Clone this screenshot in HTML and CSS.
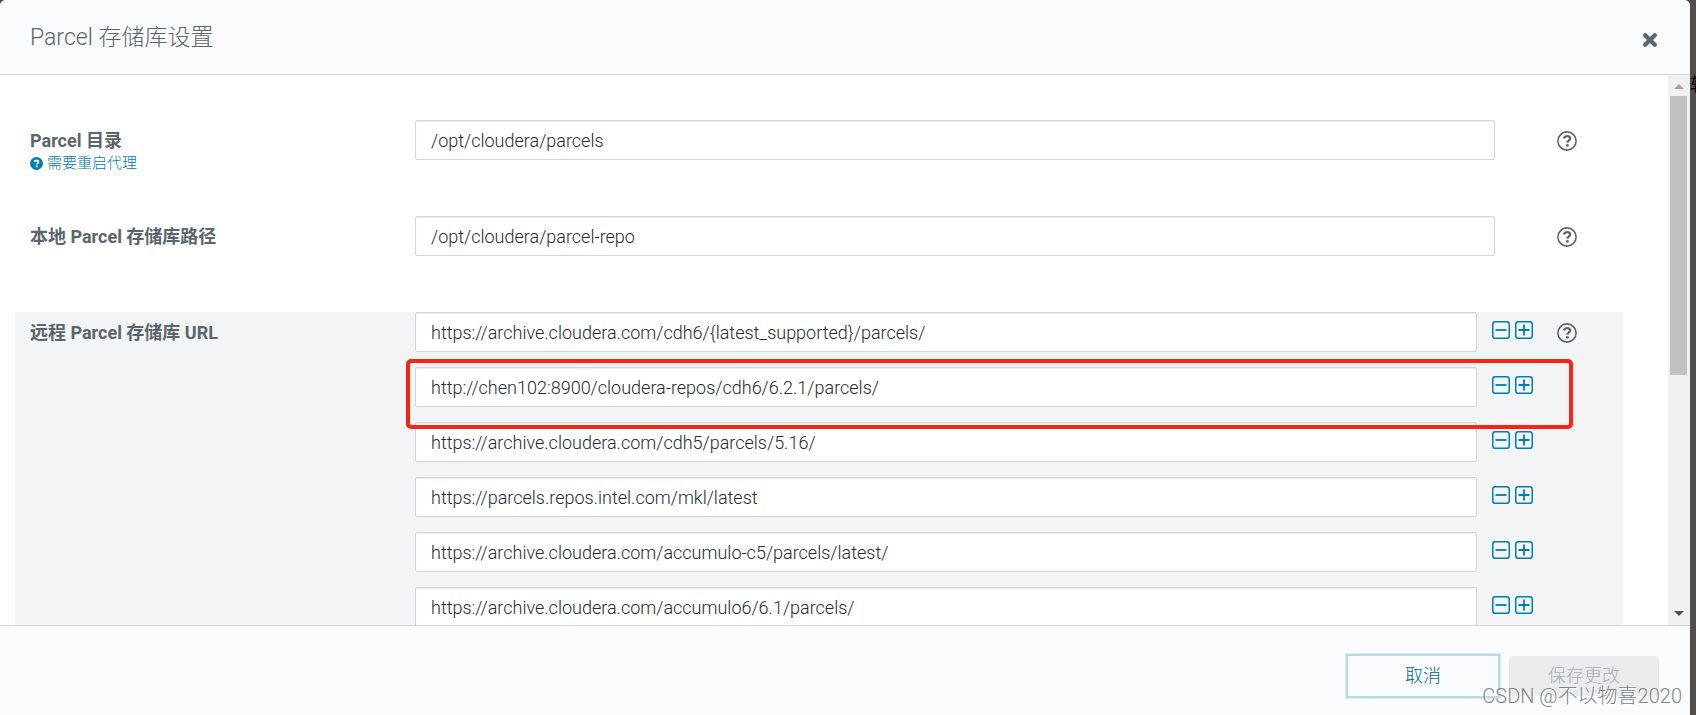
FILE: index.html
```html
<!DOCTYPE html>
<html lang="zh-CN">
<head>
<meta charset="utf-8">
<meta name="viewport" content="width=device-width, initial-scale=1">
<title>Parcel 存储库设置</title>
<link rel="stylesheet" href="styles.css">
</head>
<body>
<svg class="defs" aria-hidden="true">
  <symbol id="help" viewBox="0 0 20 20">
    <circle cx="10" cy="10" r="9.1" fill="none" stroke="currentColor" stroke-width="1.6"/>
    <path d="M6.9 7.4C7.5 5.9 8.7 5.2 10.2 5.2c1.7 0 2.9 1 2.9 2.4 0 2.1-2.7 2.1-2.7 4.2" fill="none" stroke="currentColor" stroke-width="2.3"/>
    <path d="M9 13.2h2.7v2.4H9z" fill="currentColor"/>
  </symbol>
  <symbol id="minus" viewBox="0 0 18 18">
    <rect x=".75" y=".75" width="16.5" height="16.5" rx="2.6" fill="none" stroke="currentColor" stroke-width="1.5"/>
    <path d="M3.5 9h11" stroke="currentColor" stroke-width="1.8"/>
  </symbol>
  <symbol id="plus" viewBox="0 0 18 18">
    <rect x=".75" y=".75" width="16.5" height="16.5" rx="2.6" fill="none" stroke="currentColor" stroke-width="1.5"/>
    <path d="M3.5 9h11M9 3.5v11" stroke="currentColor" stroke-width="1.8"/>
  </symbol>
</svg>
<div class="behind" aria-hidden="true">软</div>
<main class="modal">
  <header class="modal-header">
    <h1 class="title">Parcel 存储库设置</h1>
    <button class="close" type="button" aria-label="关闭"><svg viewBox="0 0 14 14"><path d="M2.2 2.2l9.6 9.6M11.8 2.2l-9.6 9.6" stroke="currentColor" stroke-width="4.2" stroke-linecap="round"/></svg></button>
  </header>
  <div class="modal-body">
    <form class="settings">
      <div class="setting">
        <div class="label-col">
          <label class="label" for="dir">Parcel 目录</label>
          <a class="restart" href="#"><svg class="restart-icon" viewBox="0 0 13 13"><circle cx="6.5" cy="6.5" r="6.5" fill="currentColor"/><path d="M4.3 4.9C4.7 3.8 5.4 3.3 6.5 3.3c1.2 0 2 .7 2 1.6 0 1.4-1.8 1.4-1.8 2.7" fill="none" stroke="#fff" stroke-width="1.7"/><path d="M5.8 8.6h1.8v1.7H5.8z" fill="#fff"/></svg>需要重启代理</a>
        </div>
        <input class="field" id="dir" type="text" value="/opt/cloudera/parcels">
        <button class="help" type="button" aria-label="帮助"><svg><use href="#help"/></svg></button>
      </div>
      <div class="setting">
        <div class="label-col"><label class="label" for="repo">本地 Parcel 存储库路径</label></div>
        <input class="field" id="repo" type="text" value="/opt/cloudera/parcel-repo">
        <button class="help" type="button" aria-label="帮助"><svg><use href="#help"/></svg></button>
      </div>
      <div class="setting setting-active">
        <div class="label-col"><label class="label" for="url1">远程 Parcel 存储库 URL</label></div>
        <div class="urls">
          <div class="url-row"><input class="field" id="url1" type="text" value="https://archive.cloudera.com/cdh6/{latest_supported}/parcels/"><span class="actions"><button type="button" aria-label="删除"><svg><use href="#minus"/></svg></button><button type="button" aria-label="添加"><svg><use href="#plus"/></svg></button></span></div>
          <div class="url-row marked"><input class="field" type="text" aria-label="URL 2" value="http://chen102:8900/cloudera-repos/cdh6/6.2.1/parcels/"><span class="actions"><button type="button" aria-label="删除"><svg><use href="#minus"/></svg></button><button type="button" aria-label="添加"><svg><use href="#plus"/></svg></button></span></div>
          <div class="url-row"><input class="field" type="text" aria-label="URL 3" value="https://archive.cloudera.com/cdh5/parcels/5.16/"><span class="actions"><button type="button" aria-label="删除"><svg><use href="#minus"/></svg></button><button type="button" aria-label="添加"><svg><use href="#plus"/></svg></button></span></div>
          <div class="url-row"><input class="field" type="text" aria-label="URL 4" value="https://parcels.repos.intel.com/mkl/latest"><span class="actions"><button type="button" aria-label="删除"><svg><use href="#minus"/></svg></button><button type="button" aria-label="添加"><svg><use href="#plus"/></svg></button></span></div>
          <div class="url-row"><input class="field" type="text" aria-label="URL 5" value="https://archive.cloudera.com/accumulo-c5/parcels/latest/"><span class="actions"><button type="button" aria-label="删除"><svg><use href="#minus"/></svg></button><button type="button" aria-label="添加"><svg><use href="#plus"/></svg></button></span></div>
          <div class="url-row"><input class="field" type="text" aria-label="URL 6" value="https://archive.cloudera.com/accumulo6/6.1/parcels/"><span class="actions"><button type="button" aria-label="删除"><svg><use href="#minus"/></svg></button><button type="button" aria-label="添加"><svg><use href="#plus"/></svg></button></span></div>
        </div>
        <button class="help" type="button" aria-label="帮助"><svg><use href="#help"/></svg></button>
      </div>
    </form>
    <div class="scrollbar" aria-hidden="true">
      <svg class="arrow arrow-up" viewBox="0 0 10 5"><path d="M0 5l5-5 5 5z"/></svg>
      <div class="track"><div class="thumb"></div></div>
      <svg class="arrow" viewBox="0 0 10 5"><path d="M0 0h10L5 5z"/></svg>
    </div>
  </div>
  <footer class="modal-footer">
    <button class="btn btn-cancel" type="button">取消</button>
    <button class="btn" type="button" disabled>保存更改</button>
  </footer>
</main>
<div class="watermark">CSDN @不以物喜2020</div>
</body>
</html>
```

FILE: styles.css
```css
* {
  box-sizing: border-box;
}

body {
  margin: 0;
  height: 100vh;
  overflow: hidden;
  position: relative;
  padding-right: 6px;
  background: #504f4e;
  color: #5a656d;
  font: 18px/24px Roboto, "Noto Sans CJK SC", sans-serif;
}

button {
  padding: 0;
  border: 0;
  background: none;
  color: inherit;
  font: inherit;
}

.defs {
  position: absolute;
  width: 0;
  height: 0;
}

.behind {
  position: absolute;
  top: 73px;
  right: 0;
  width: 6px;
  overflow: hidden;
  color: #000;
}

.modal {
  display: flex;
  flex-direction: column;
  height: 100%;
  overflow: hidden;
  border-radius: 6px 6px 0 0;
  background: #fff;
}

.modal-header {
  display: flex;
  justify-content: space-between;
  align-items: center;
  height: 75px;
  padding: 2px 33px 0 30px;
  border-bottom: 1px solid #d3d6d9;
  background: #fafbfd;
}

.title {
  margin: 0;
  font-size: 23px;
  font-weight: 300;
}

.close {
  padding-top: 4px;
}

.close svg {
  display: block;
  width: 14px;
  height: 14px;
}

.modal-body {
  display: flex;
  flex: 1;
  min-height: 0;
  overflow: hidden;
}

.settings {
  flex: 1;
  padding: 45px 45px 0 15px;
}

.setting {
  display: grid;
  grid-template-columns: 400px 1fr 128px;
  align-items: start;
  min-height: 96px;
}

.setting-active {
  background: #f3f4f6;
}

.label-col {
  display: flex;
  flex-direction: column;
  align-items: flex-start;
  padding: 9px 15px 0;
}

.label {
  font-weight: 700;
}

.restart {
  display: flex;
  align-items: center;
  gap: 4px;
  color: #007cb6;
  font-size: 15px;
  font-weight: 300;
  line-height: 20px;
  text-decoration: none;
}

.restart-icon {
  width: 13px;
  height: 13px;
}

.field {
  width: 100%;
  height: 40px;
  padding: 0 15px;
  border: 1px solid #d3d6d9;
  border-radius: 2px;
  background: #fff;
  box-shadow: inset 0 1px 1px rgba(0, 0, 0, .08);
  color: #222b33;
  font: inherit;
  font-weight: 300;
}

.help {
  justify-self: start;
  margin: 11px 0 0 62px;
}

.help svg {
  display: block;
  width: 20px;
  height: 20px;
}

.urls {
  display: flex;
  flex-direction: column;
  gap: 15px;
}

.url-row {
  display: grid;
  grid-template-columns: 1fr 42px;
  column-gap: 15px;
  position: relative;
  margin-right: -39px;
}

.actions {
  display: flex;
  align-items: flex-start;
  gap: 5px;
  padding-top: 9px;
  color: #007cb6;
}

.actions svg {
  display: block;
  width: 18px;
  height: 18px;
}

.marked::after {
  content: "";
  position: absolute;
  inset: -8px -39px -22px -9px;
  z-index: 1;
  border: 4px solid #ff2014;
  border-radius: 5px;
  pointer-events: none;
}

.scrollbar {
  display: flex;
  flex-direction: column;
  align-items: center;
  width: 22px;
  padding: 9px 1px 9px 0;
  background: #f1f1f1;
}

.arrow {
  width: 10px;
  height: 5px;
  fill: #505050;
}

.arrow-up {
  fill: #a3a3a3;
}

.track {
  flex: 1;
  padding: 7px 0;
}

.thumb {
  width: 17px;
  height: 55%;
  background: #c1c1c1;
}

.modal-footer {
  display: flex;
  justify-content: flex-end;
  gap: 11px;
  padding: 30px 31px 19px;
  border-top: 1px solid #d3d6d9;
  background: #fafbfd;
}

.btn {
  width: 150px;
  height: 40px;
  border-radius: 2px;
  background: #e9ebed;
  color: #a9afb4;
  font-weight: 300;
}

.btn-cancel {
  border-radius: 0;
  background: #fafbfd;
  color: #00659c;
  box-shadow: 0 0 0 2px #b9d9e8, 0 0 0 3px #d9eaf2;
}

.watermark {
  position: absolute;
  right: 14px;
  bottom: 7px;
  color: #808488;
  font-size: 20px;
  font-weight: 300;
  text-shadow: 1px 1px 1px #fff;
}
```
